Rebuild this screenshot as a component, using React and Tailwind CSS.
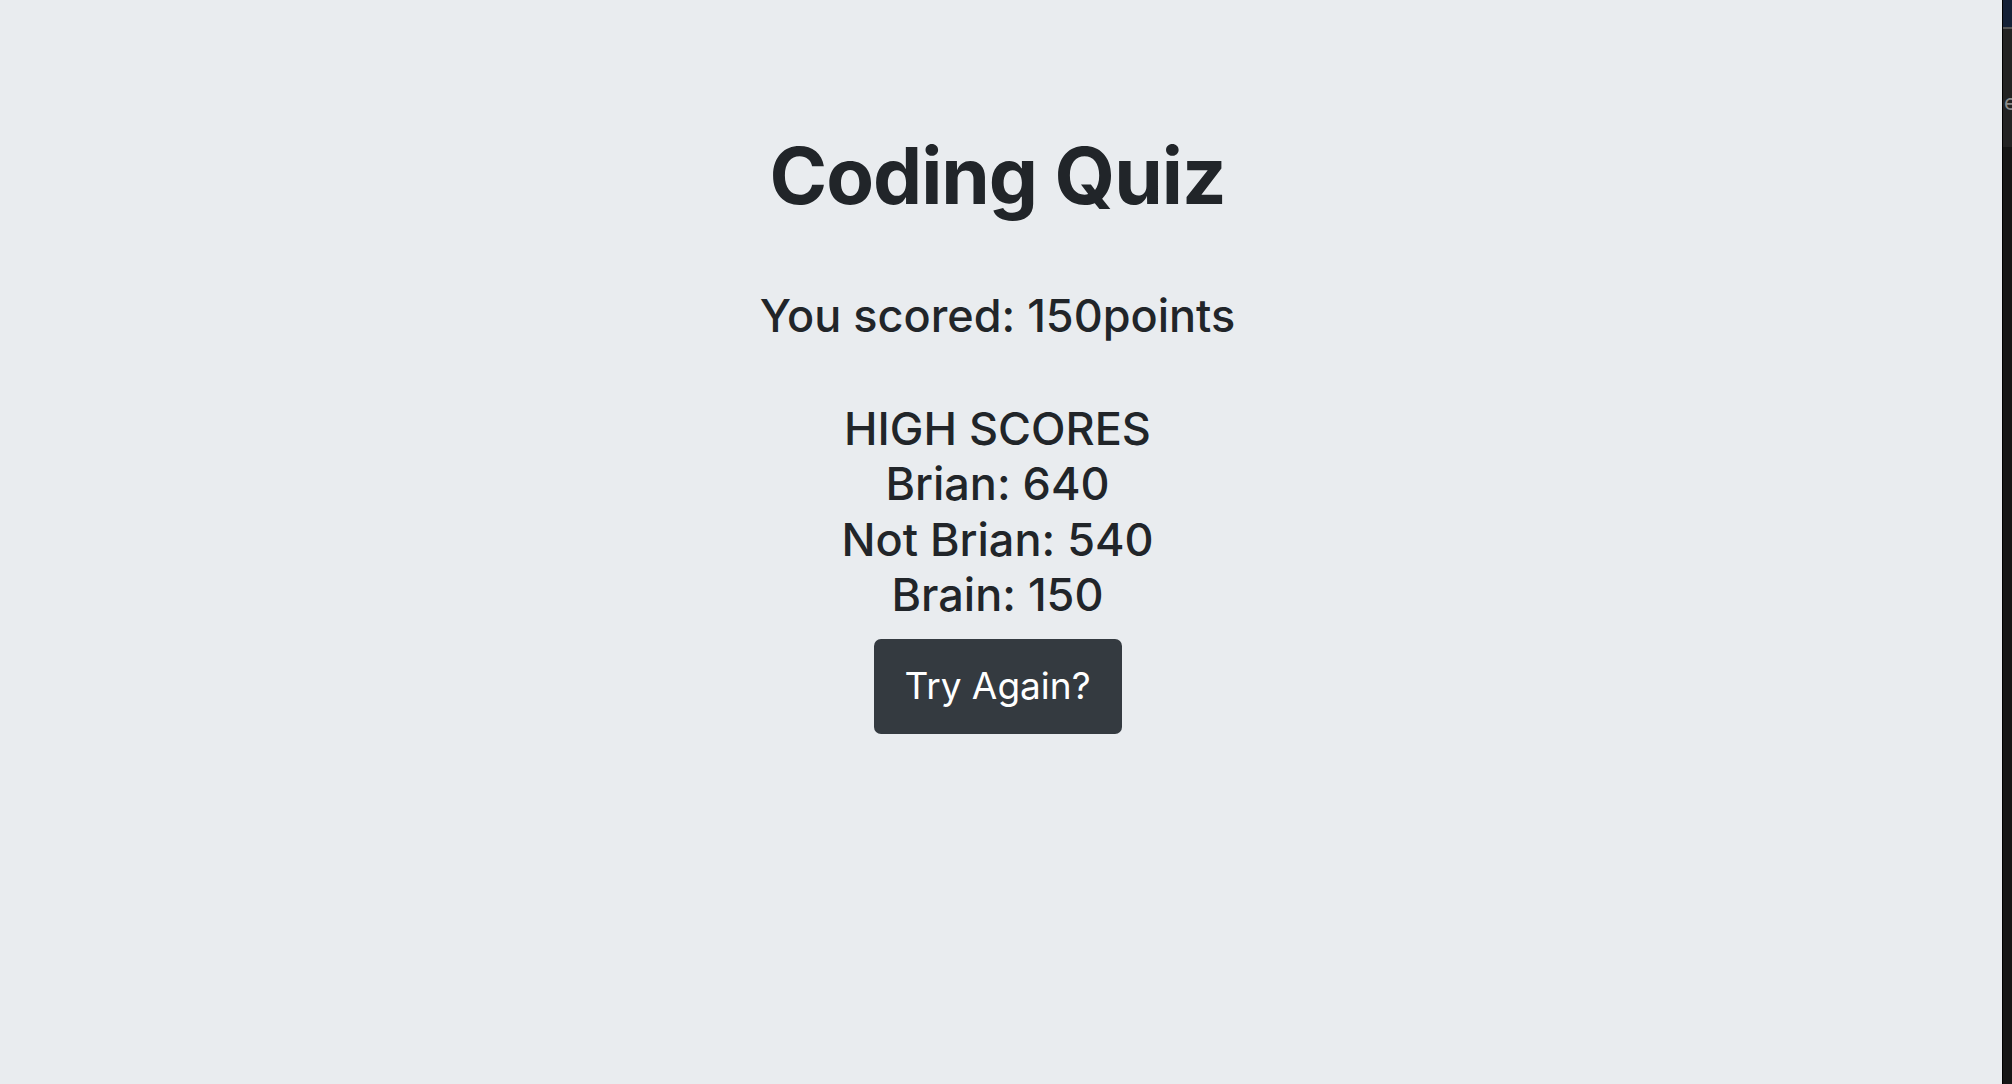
const scores = [
  { name: 'Brian', points: 640 },
  { name: 'Not Brian', points: 540 },
  { name: 'Brain', points: 150 },
]

function DevtoolsEdge() {
  return (
    <div className="flex w-[10px] shrink-0 flex-col border-l border-black bg-[#161616]">
      <div className="h-[27px] bg-[#142036]" />
      <div className="h-[2px] bg-[#555]" />
      <div className="relative h-[118px] overflow-hidden bg-[#232323]">
        <span className="absolute left-[1px] top-[62px] text-[22px] leading-none text-[#8a8a8a]">e</span>
      </div>
      <div className="flex-1" />
    </div>
  )
}

export default function App() {
  return (
    <div className="flex h-[1084px] w-full overflow-hidden font-['Inter','Noto_Sans',sans-serif] text-[#212529]">
      <main className="flex flex-1 flex-col items-center bg-[#e9ecef] pr-[7px] pt-[129px]">
        <h1 className="text-[78px] font-bold leading-[1.2] tracking-[-1px]">Coding Quiz</h1>
        <p className="mt-[66px] text-[45px] font-medium leading-[1.2]">You scored: 150points</p>
        <div className="mt-[58px] flex flex-col items-center text-[45px] font-medium leading-[55.5px]">
          <span>HIGH SCORES</span>
          {scores.map((s) => (
            <span key={s.name}>
              {s.name}: {s.points}
            </span>
          ))}
        </div>
        <button className="mt-[16px] flex h-[95px] w-[248px] items-center justify-center rounded-[7px] bg-[#343a40] text-[37px] text-white">
          Try Again?
        </button>
      </main>
      <DevtoolsEdge />
    </div>
  )
}
